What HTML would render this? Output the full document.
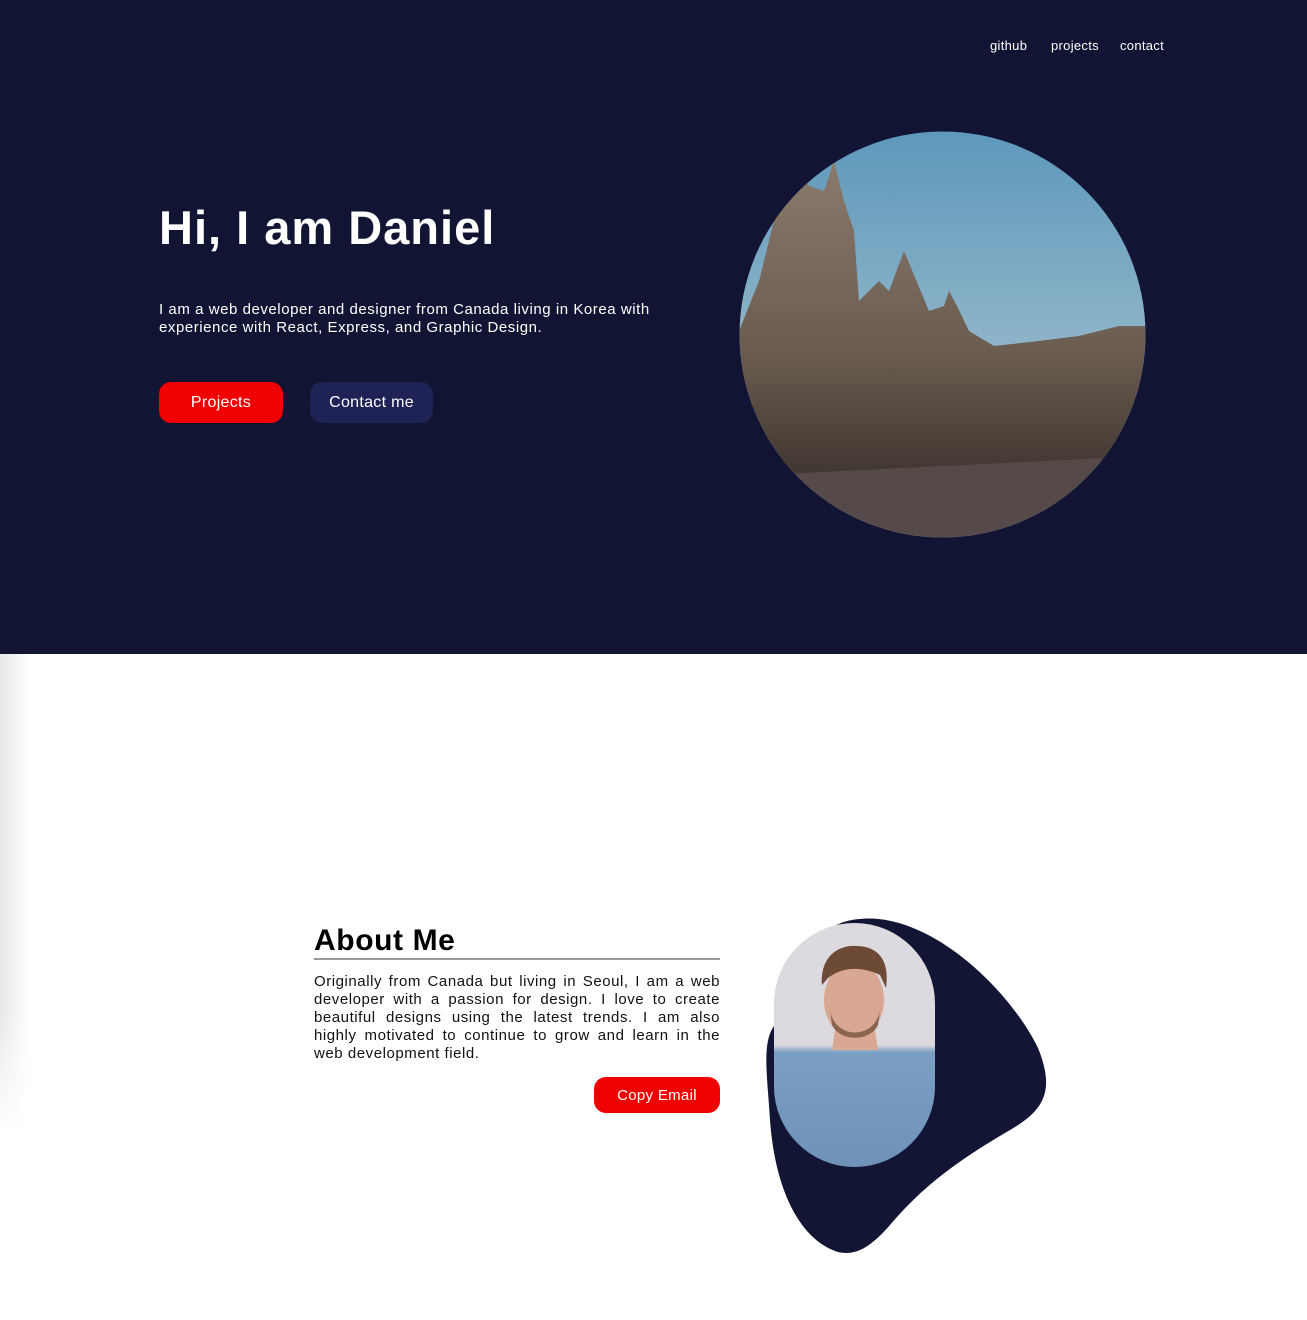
<!DOCTYPE html>
<html><head><meta charset="utf-8"><style>
*{margin:0;padding:0;box-sizing:border-box}
body{width:1307px;height:1320px;overflow:hidden;background:#fff;font-family:"Liberation Sans",sans-serif;position:relative}
.hero{position:absolute;left:0;top:0;width:1307px;height:654px;background:#121433}
.nav{position:absolute;top:38px;color:#fff;font-size:13px;letter-spacing:0.3px}
h1{position:absolute;left:159px;top:200px;color:#fff;font-size:47px;font-weight:bold;white-space:nowrap;letter-spacing:1px}
.intro{position:absolute;left:159px;top:301px;color:#fff;font-size:15px;line-height:18px;white-space:nowrap;letter-spacing:0.55px}
.btn{position:absolute;border-radius:12px;color:#fff;font-size:16px;display:flex;align-items:center;justify-content:center;letter-spacing:0.3px}
.shadow{position:absolute;left:0;top:654px;width:30px;height:480px;background:linear-gradient(90deg,rgba(0,0,0,.09),rgba(0,0,0,0));-webkit-mask:linear-gradient(180deg,#000 75%,transparent)}
h2{position:absolute;left:314px;top:924px;font-size:30px;font-weight:bold;color:#000;letter-spacing:0.6px}
.line{position:absolute;left:314px;top:958px;width:406px;height:2px;background:#999}
.about{position:absolute;left:314px;top:973px;width:406px;font-size:15px;line-height:18px;text-align:justify;color:#111;letter-spacing:0.55px}
</style></head><body>
<div class="hero">
<div class="nav" style="left:990px">github</div>
<div class="nav" style="left:1051px">projects</div>
<div class="nav" style="left:1120px">contact</div>
<h1>Hi, I am Daniel</h1>
<div class="intro">I am a web developer and designer from Canada living in Korea with<br>experience with React, Express, and Graphic Design.</div>
<div class="btn" style="left:159px;top:382px;width:124px;height:41px;background:#f00000">Projects</div>
<div class="btn" style="left:310px;top:382px;width:123px;height:41px;background:#1e2254">Contact me</div>
<svg style="position:absolute;left:739px;top:131px" width="407" height="407" viewBox="0 0 407 407">
<defs>
<clipPath id="c"><circle cx="203.5" cy="203.5" r="203"/></clipPath>
<linearGradient id="sky" x1="0" y1="0" x2="0" y2="1"><stop offset="0" stop-color="#5d98bb"/><stop offset="0.5" stop-color="#8cb3c8"/><stop offset="1" stop-color="#aab9c2"/></linearGradient>
<linearGradient id="bld" x1="0" y1="0" x2="0" y2="1"><stop offset="0" stop-color="#8a7a6c"/><stop offset="0.6" stop-color="#6a5c50"/><stop offset="1" stop-color="#3e352f"/></linearGradient>
</defs>
<g clip-path="url(#c)">
<rect width="407" height="407" fill="url(#sky)"/>
<path d="M0 200 L20 150 L30 110 L40 70 L50 55 L60 30 L70 55 L85 60 L95 30 L105 70 L115 100 L120 170 L140 150 L150 160 L165 120 L190 180 L205 175 L210 160 L218 175 L230 200 L255 215 L300 210 L340 205 L380 195 L407 195 L407 340 L0 350Z" fill="url(#bld)"/>
<path d="M0 345 L407 325 L407 407 L0 407Z" fill="#56494a"/>
</g></svg>
</div>
<div class="shadow"></div>
<h2>About Me</h2>
<div class="line"></div>
<div class="about">Originally from Canada but living in Seoul, I am a web developer with a passion for design. I love to create beautiful designs using the latest trends. I am also highly motivated to continue to grow and learn in the web development field.</div>
<div class="btn" style="left:594px;top:1077px;width:126px;height:36px;background:#f00000;font-size:15px">Copy Email</div>
<svg style="position:absolute;left:0;top:0" width="1307" height="1320">
<path d="M860 919 C930 912 1010 990 1038 1048 C1055 1090 1045 1110 1010 1130 C950 1165 920 1190 890 1225 C870 1248 855 1256 838 1252 C800 1240 775 1190 770 1120 C767 1070 760 1035 780 1020 L800 960 C820 930 840 920 860 919Z" fill="#121533"/>
<defs><linearGradient id="sh" x1="0" y1="0" x2="0" y2="1"><stop offset="0" stop-color="#dcdadf"/><stop offset="0.5" stop-color="#dcdadf"/><stop offset="0.53" stop-color="#7c9fc4"/><stop offset="1" stop-color="#6e91b8"/></linearGradient></defs>
<rect x="774" y="923" width="161" height="244" rx="80.5" fill="url(#sh)"/>
<path d="M835 1030 L875 1030 L878 1050 L832 1050Z" fill="#d9a892"/>
<ellipse cx="854" cy="1000" rx="30" ry="38" fill="#d9a892"/>
<path d="M822 985 C820 955 840 945 856 946 C878 946 890 960 886 988 L880 975 C860 965 840 968 828 978Z" fill="#6d4a35"/>
<path d="M830 1010 C835 1040 875 1040 880 1010 L878 1025 C870 1042 840 1042 832 1025Z" fill="#8a6550"/>
</svg>
</body></html>
